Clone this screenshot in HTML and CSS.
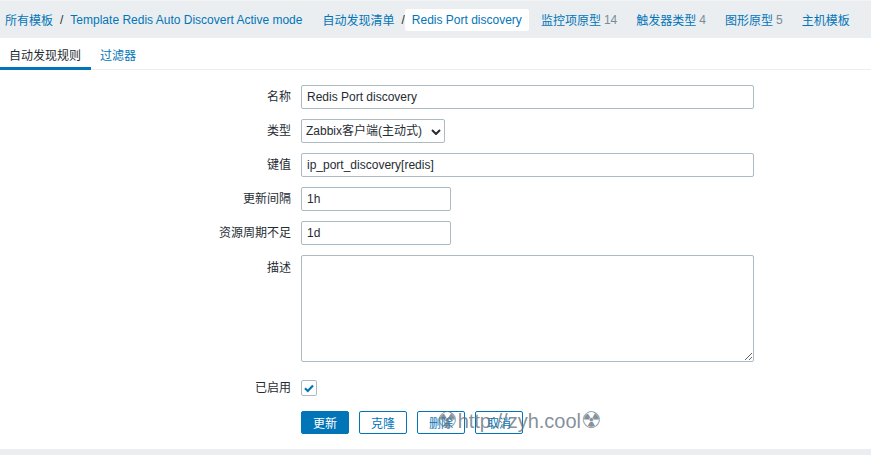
FILE: index.html
```html
<!DOCTYPE html>
<html lang="zh">
<head>
<meta charset="utf-8">
<title>Redis Port discovery</title>
<link rel="stylesheet" href="styles.css">
</head>
<body>
<header class="nav">
  <div class="crumbs first">
    <a class="link" href="#">所有模板</a><span class="sep">/</span><a class="link" href="#">Template Redis Auto Discovert Active mode</a>
  </div>
  <div class="crumbs">
    <a class="link" href="#">自动发现清单</a><span class="sep">/</span><span class="current">Redis Port discovery</span>
  </div>
  <div class="crumbs"><a class="link" href="#">监控项原型</a><span class="count">14</span></div>
  <div class="crumbs"><a class="link" href="#">触发器类型</a><span class="count">4</span></div>
  <div class="crumbs"><a class="link" href="#">图形原型</a><span class="count">5</span></div>
  <div class="crumbs"><a class="link" href="#">主机模板</a></div>
</header>
<main class="page">
  <nav class="tabs">
    <span class="tab active">自动发现规则</span>
    <span class="tab">过滤器</span>
  </nav>
  <form class="form">
    <label class="lbl">名称</label>
    <div class="field"><input class="inp wide" type="text" value="Redis Port discovery"></div>

    <label class="lbl">类型</label>
    <div class="field">
      <span class="selwrap">
        <select class="sel"><option>Zabbix客户端(主动式)</option></select>
        <svg class="chev" width="10" height="6" viewBox="0 0 10 6"><path d="M1 1 L5 5 L9 1" fill="none" stroke="#1f2c33" stroke-width="2"/></svg>
      </span>
    </div>

    <label class="lbl">键值</label>
    <div class="field"><input class="inp wide" type="text" value="ip_port_discovery[redis]"></div>

    <label class="lbl">更新间隔</label>
    <div class="field"><input class="inp short" type="text" value="1h"></div>

    <label class="lbl">资源周期不足</label>
    <div class="field"><input class="inp short" type="text" value="1d"></div>

    <label class="lbl top">描述</label>
    <div class="field"><textarea class="area"></textarea></div>

    <label class="lbl chkrow">已启用</label>
    <div class="field chkrow">
      <span class="chk"><svg width="14" height="14" viewBox="0 0 14 14"><path d="M3 7.2 L5.8 10 L11 4.5" fill="none" stroke="#0275b8" stroke-width="2.2"/></svg></span>
    </div>

    <div></div>
    <div class="buttons">
      <button type="button" class="btn primary">更新</button>
      <button type="button" class="btn">克隆</button>
      <button type="button" class="btn">删除</button>
      <button type="button" class="btn">取消</button>
    </div>
  </form>
  <div class="watermark"><span class="rad">☢</span>http://zyh.cool<span class="rad">☢</span></div>
</main>
</body>
</html>
```
FILE: styles.css
```css
* { box-sizing: border-box; }
html, body {
  margin: 0;
  height: 455px;
  overflow: hidden;
  background: #ebeef0;
  font-family: "Liberation Sans", Arial, "Noto Sans CJK SC", sans-serif;
  font-size: 12px;
  color: #1f2c33;
}
.nav {
  height: 38px;
  display: flex;
  align-items: center;
  padding-left: 5px;
  gap: 19px;
  background: #ebeef0;
  border-top: 1px solid #f2f4f5;
}
.crumbs {
  display: flex;
  align-items: center;
  white-space: nowrap;
}
.crumbs.first { margin-right: 1px; }
.link {
  color: #0275b8;
  text-decoration: none;
}
.sep {
  color: #1f2c33;
  margin: 0 7px;
}
.current {
  color: #0275b8;
  background: #fff;
  margin: 0 -7px;
  padding: 0 7px;
  height: 22px;
  line-height: 22px;
  border-radius: 2px;
}
.count {
  color: #768d99;
  margin-left: 3px;
}
.page {
  position: relative;
  background: #fff;
  height: 411px;
}
.tabs {
  display: flex;
  height: 32px;
  border-bottom: 1px solid #ebeef0;
}
.tab {
  display: flex;
  align-items: center;
  padding: 0 10px 0 9px;
  color: #0275b8;
  height: 32px;
}
.tab.active {
  color: #1f2c33;
  border-bottom: 3px solid #0275b8;
  padding-top: 3px;
  width: 91px;
}
.form {
  display: grid;
  grid-template-columns: 291px 1fr;
  column-gap: 10px;
  row-gap: 10px;
  padding-top: 15px;
}
.lbl {
  text-align: right;
  height: 24px;
  line-height: 24px;
}
.lbl.top { line-height: 26px; }
.field { display: flex; align-items: center; }
.inp {
  height: 24px;
  border: 1px solid #acbbc2;
  border-radius: 2px;
  padding: 0 5px;
  font: inherit;
  color: #1f2c33;
  background: #fff;
  outline: none;
}
.wide { width: 453px; }
.short { width: 150px; }
.selwrap {
  position: relative;
  display: inline-block;
}
.sel {
  appearance: none;
  -webkit-appearance: none;
  width: 144px;
  height: 24px;
  border: 1px solid #acbbc2;
  border-radius: 2px;
  padding: 0 4px;
  font: inherit;
  color: #1f2c33;
  background: #fff;
}
.chev {
  position: absolute;
  left: 130px;
  top: 10px;
  pointer-events: none;
}
.area {
  width: 453px;
  height: 107px;
  border: 1px solid #acbbc2;
  border-radius: 2px;
  resize: vertical;
  font: inherit;
  outline: none;
}
.chkrow { margin-top: 4px; }
.chk {
  width: 16px;
  height: 16px;
  border: 1px solid #acbbc2;
  border-radius: 2px;
  display: flex;
  align-items: center;
  justify-content: center;
}
.chk svg { display: block; }
.buttons {
  display: flex;
  gap: 10px;
  margin-top: 1px;
}
.btn {
  width: 48px;
  height: 23px;
  border: 1px solid #0275b8;
  border-radius: 2px;
  background: #fff;
  color: #0275b8;
  font: inherit;
  padding: 0;
}
.btn.primary {
  background: #0275b8;
  color: #fff;
}
.watermark {
  position: absolute;
  left: 437px;
  top: 372px;
  font-family: "Liberation Sans", "DejaVu Sans", sans-serif;
  font-size: 20px;
  line-height: 21px;
  color: rgba(100, 115, 130, 0.8);
  white-space: nowrap;
  pointer-events: none;
}
.rad {
  font-family: "DejaVu Sans", sans-serif;
  font-size: 23px;
}
```
